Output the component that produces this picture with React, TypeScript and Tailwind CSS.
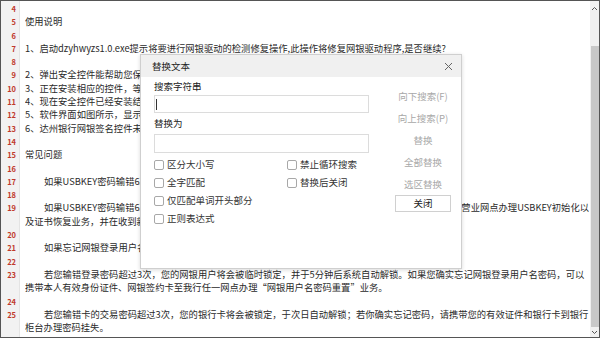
import React from "react";

type Row = { n?: number; indent?: boolean; text?: string; right?: string };

const rows: Row[] = [
  { n: 4 },
  { n: 5, text: "使用说明" },
  { n: 6 },
  { n: 7, text: "1、启动dzyhwyzs1.0.exe提示将要进行网银驱动的检测修复操作,此操作将修复网银驱动程序,是否继续?" },
  { n: 8 },
  { n: 9, text: "2、弹出安全控件能帮助您保护网银登录密码，请点击安装。" },
  { n: 10, text: "3、正在安装相应的控件，等待安装完成。" },
  { n: 11, text: "4、现在安全控件已经安装结束，请点击完成。" },
  { n: 12, text: "5、软件界面如图所示，显示检测修复结果。" },
  { n: 13, text: "6、达州银行网银签名控件未安装，请重新安装。" },
  { n: 14 },
  { n: 15, text: "常见问题" },
  { n: 16 },
  { n: 17, indent: true, text: "如果USBKEY密码输错6次，USBKEY将被锁定。" },
  { n: 18 },
  { n: 19, indent: true, text: "如果USBKEY密码输错6次，USBKEY将被锁定，请携带", right: "一营业网点办理USBKEY初始化以" },
  { text: "及证书恢复业务，并在收到新证书后及时修改密码。" },
  { n: 20 },
  { n: 21, indent: true, text: "如果忘记网银登录用户名，请联系我行客服。" },
  { n: 22 },
  { n: 23, indent: true, text: "若您输错登录密码超过3次，您的网银用户将会被临时锁定，并于5分钟后系统自动解锁。如果您确实忘记网银登录用户名密码，可以" },
  { text: "携带本人有效身份证件、网银签约卡至我行任一网点办理“网银用户名密码重置”业务。" },
  { n: 24 },
  { n: 25, indent: true, text: "若您输错卡的交易密码超过3次，您的银行卡将会被锁定，于次日自动解锁；若你确实忘记密码，请携带您的有效证件和银行卡到银行" },
  { text: "柜台办理密码挂失。" },
];

const font = { fontFamily: '"Noto Sans CJK SC", "Noto Sans", sans-serif' };

function Check({ label }: { label: string }) {
  return (
    <div className="flex items-center gap-[3px] h-[18px]">
      <span className="w-[10px] h-[10px] border border-[#a8a8a8] rounded-[2px] bg-white" />
      <span className="text-[9.5px] text-[#333] leading-none">{label}</span>
    </div>
  );
}

export default function App() {
  return (
    <div className="relative w-[600px] h-[338px] overflow-hidden bg-white border border-[#555] flex" style={font}>
      {/* gutter */}
      <div className="w-[19px] shrink-0 bg-[#f2f2f2] border-r border-[#e4e4e4] pt-[1px]">
        {rows.map((r, i) => (
          <div key={i} className="h-[13.3px] leading-[13.3px] text-right pr-[3px] text-[7.5px] font-bold text-[#c0392b]">
            {r.n ?? ""}
          </div>
        ))}
      </div>
      {/* text */}
      <div className="flex-1 min-w-0 pt-[1px] pl-[5px] pr-[1px] overflow-hidden">
        {rows.map((r, i) => (
          <div
            key={i}
            className={`h-[13.3px] leading-[13.3px] text-[9.3px] text-[#2a2a2a] whitespace-nowrap overflow-hidden flex ${r.right ? "justify-between" : ""} ${r.indent ? "pl-[19px]" : ""}`}
          >
            <span>{r.text ?? ""}</span>
            {r.right && <span>{r.right}</span>}
          </div>
        ))}
      </div>
      {/* scrollbar */}
      <div className="w-[9px] shrink-0 bg-[#f0f0f0] flex flex-col items-center">
        <div className="h-[14px] flex items-center justify-center">
          <svg width="7" height="5" viewBox="0 0 7 5"><path d="M1 4 L3.5 1.5 L6 4" stroke="#555" strokeWidth="1" fill="none" /></svg>
        </div>
        <div className="h-[31px]" />
        <div className="w-[8px] flex-1 bg-[#c8c8c8]" />
        <div className="h-[10px] flex items-center justify-center">
          <svg width="7" height="5" viewBox="0 0 7 5"><path d="M1 1 L3.5 3.5 L6 1" stroke="#555" strokeWidth="1" fill="none" /></svg>
        </div>
      </div>

      {/* dialog */}
      <div className="absolute left-[139px] top-[53px] w-[322px] h-[215px] bg-white border border-[#cfcfcf] shadow-[0_1px_4px_rgba(0,0,0,0.15)] flex flex-col">
        <div className="h-[22px] shrink-0 bg-[#f0f0f0] flex items-center justify-between pl-[11px] pr-[8px]">
          <span className="text-[9.5px] text-[#222]">替换文本</span>
          <svg width="9" height="9" viewBox="0 0 9 9"><path d="M1 1 L8 8 M8 1 L1 8" stroke="#666" strokeWidth="1" /></svg>
        </div>
        <div className="flex flex-1 pl-[13px] pr-[10px]">
          <div className="w-[216px] flex flex-col">
            <div className="h-[16px] mt-[1px] flex items-center text-[9.5px] text-[#222]">搜索字符串</div>
            <div className="h-[18px] mt-[1px] border border-[#dcdcdc] flex items-center pl-[1px]">
              <span className="w-[1px] h-[11px] bg-[#333]" />
            </div>
            <div className="h-[16px] mt-[2px] flex items-center text-[9.5px] text-[#222]">替换为</div>
            <div className="h-[19px] mt-[3px] border border-[#dcdcdc]" />
            <div className="grid grid-cols-[133px_1fr] mt-[3px]">
              <Check label="区分大小写" />
              <Check label="禁止循环搜索" />
              <Check label="全字匹配" />
              <Check label="替换后关闭" />
              <Check label="仅匹配单词开头部分" />
              <div />
              <Check label="正则表达式" />
            </div>
          </div>
          <div className="flex-1 flex flex-col items-center pl-[26px] pt-[8px] text-[9.5px] text-[#a8a8a8]">
            <div className="h-[22px] flex items-center">向下搜索(F)</div>
            <div className="h-[22px] flex items-center">向上搜索(P)</div>
            <div className="h-[22px] flex items-center">替换</div>
            <div className="h-[22px] flex items-center">全部替换</div>
            <div className="h-[22px] flex items-center">选区替换</div>
            <div className="w-[56px] h-[17px] border border-[#d0d0d0] flex items-center justify-center text-[#222]">关闭</div>
          </div>
        </div>
      </div>
    </div>
  );
}
